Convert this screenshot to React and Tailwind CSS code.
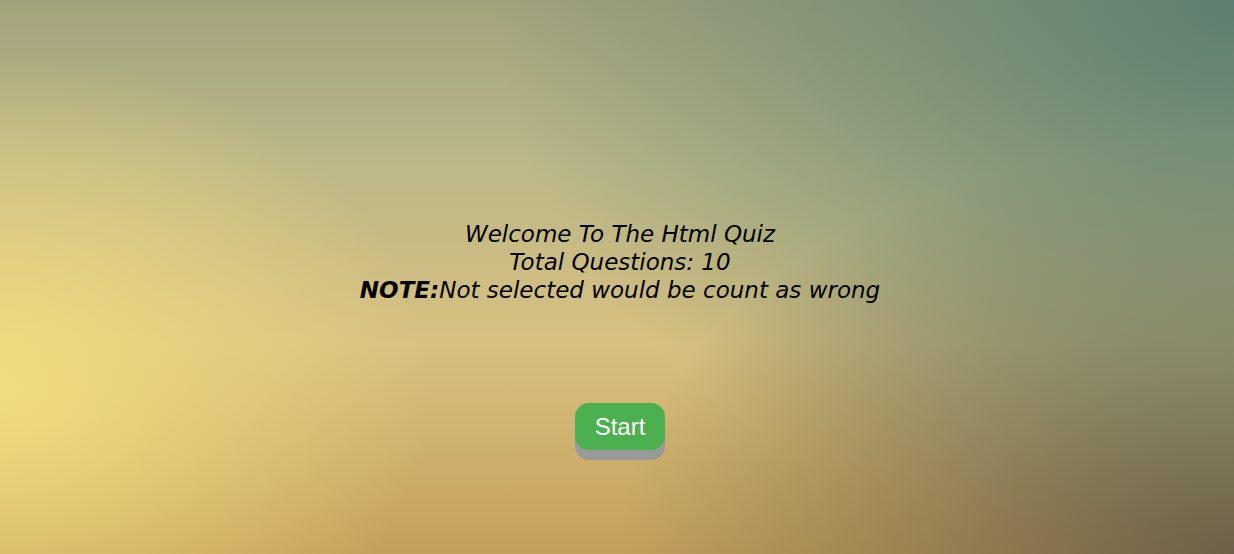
import React from "react";

const App = () => {
  return (
    <div className="min-h-screen w-full pl-[6px] flex flex-col items-center bg-[radial-gradient(ellipse_60%_100%_at_100%_0%,rgba(94,128,112,1),rgba(94,128,112,0)),radial-gradient(ellipse_50%_75%_at_100%_100%,rgba(108,96,72,1),rgba(108,96,72,0)),radial-gradient(ellipse_35%_60%_at_0%_70%,rgba(242,220,128,1),rgba(242,220,128,0)),linear-gradient(180deg,#a2a27c_0%,#bcb888_30%,#d8c080_62%,#c4a15a_100%)]">
      <div className="pt-[220px] text-center italic text-black text-[23px] leading-[28px] font-['DejaVu_Sans',Verdana,sans-serif]">
        <div>Welcome To The Html Quiz</div>
        <div>Total Questions: 10</div>
        <div>
          <b>NOTE:</b>Not selected would be count as wrong
        </div>
      </div>
      <button className="mt-[99px] px-5 h-[47px] rounded-[14px] bg-[#4caf50] text-white text-[24px] font-['Liberation_Sans',Arial,sans-serif] shadow-[0_10px_0_#999]">
        Start
      </button>
    </div>
  );
};

export default App;
